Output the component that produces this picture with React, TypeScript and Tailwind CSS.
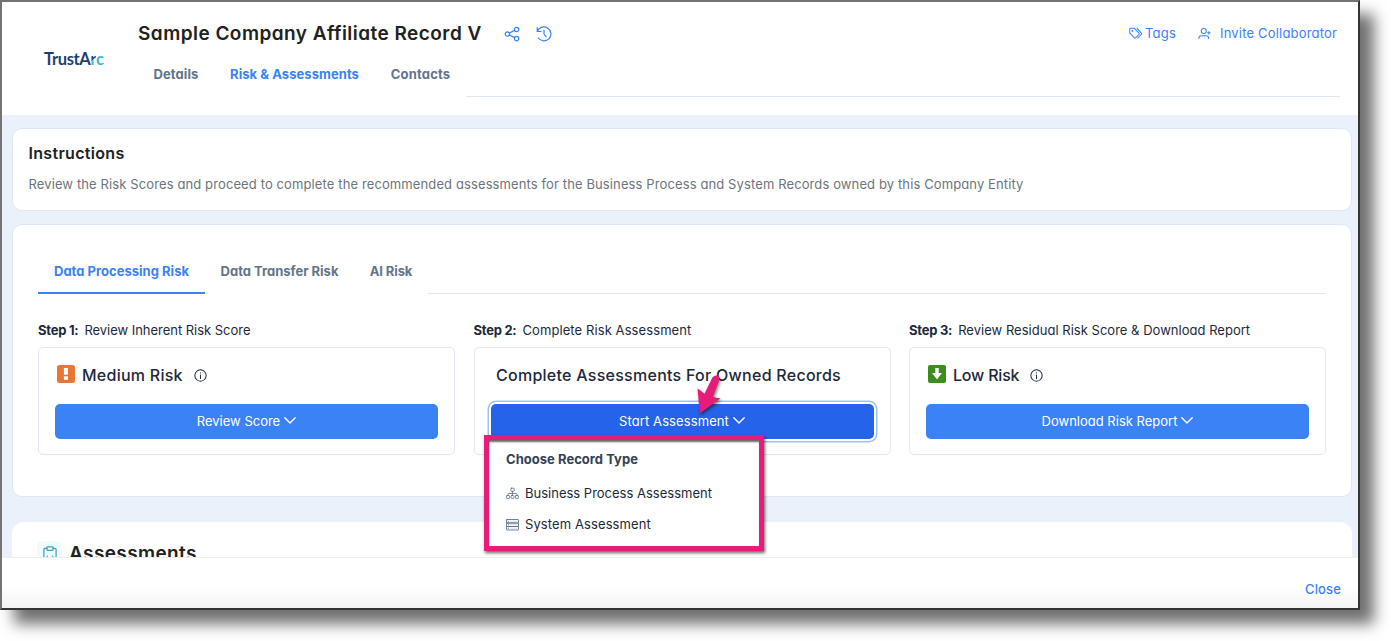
import type { ReactNode } from "react";

type IconProps = { className?: string };

function Icon({ className = "", box = 16, width = 1.1, children }: IconProps & { box?: number; width?: number; children: ReactNode }) {
  return (
    <svg
      viewBox={`0 0 ${box} ${box}`}
      fill="none"
      stroke="currentColor"
      strokeWidth={width}
      strokeLinecap="round"
      strokeLinejoin="round"
      className={`shrink-0 ${className}`}
    >
      {children}
    </svg>
  );
}

const ShareIcon = ({ className }: IconProps) => (
  <Icon className={className} width={1.2}>
    <circle cx="3.4" cy="8" r="2.2" />
    <circle cx="12.6" cy="3.5" r="2.2" />
    <circle cx="12.6" cy="12.6" r="2.2" />
    <path d="M5.4 7 10.6 4.4M5.4 9l5.2 2.6" />
  </Icon>
);

const HistoryIcon = ({ className }: IconProps) => (
  <Icon className={className} width={1.2}>
    <path d="M1.2 1.6v3.9h3.9M1.4 5.3A7 7 0 1 1 2.3 12" />
    <path d="M8 4.3V8l2 2.7" />
  </Icon>
);

const TagsIcon = ({ className }: IconProps) => (
  <Icon className={className} box={14} width={1.1}>
    <path d="M.8 2v4.300l5 5.400a.9.9 0 0 0 1.300 0l3.700-3.900a.9.9 0 0 0 0-1.300L5.800 1.400H1.400a.6.6 0 0 0-.6.6Z" />
    <path d="M8.600 1.500l4.700 5a.9.9 0 0 1 0 1.300l-3.900 4.100" />
    <circle cx="3.7" cy="4.300" r=".4" fill="currentColor" />
  </Icon>
);

const UserPlusIcon = ({ className }: IconProps) => (
  <Icon className={className} box={14} width={1.1}>
    <circle cx="6.2" cy="4.2" r="2.7" />
    <path d="M.9 12.500v-.5c0-1.700 1.300-2.700 2.800-2.700h5c1.500 0 2.800 1 2.800 2.700v.5M11.700 4.800v3M10.200 6.300h3" />
  </Icon>
);

const InfoIcon = ({ className }: IconProps) => (
  <Icon className={className} box={14} width={1.1}>
    <circle cx="7" cy="7" r="6.100" />
    <path d="M7 6.400v3.700M7 4v.2" />
  </Icon>
);

const ChevronIcon = () => (
  <Icon className="size-[14px]" box={14} width={1.4}>
    <path d="M1.800 3.700 7 8.900l5.200-5.200" />
  </Icon>
);

const SitemapIcon = ({ className }: IconProps) => (
  <Icon className={className} box={14} width={0.9}>
    <rect x="5.200" y="1.300" width="3.600" height="3.400" rx=".6" />
    <rect x=".6" y="9.200" width="3.200" height="3.100" rx=".6" />
    <rect x="5.400" y="9.200" width="3.200" height="3.100" rx=".6" />
    <rect x="10.200" y="9.200" width="3.200" height="3.100" rx=".6" />
    <path d="M7 4.700v4.500M2.200 9.200V7.800c0-.5.300-.8.800-.8h8c.5 0 .8.300.8.800v1.400" />
  </Icon>
);

const ServerIcon = ({ className }: IconProps) => (
  <Icon className={className} box={13} width={0.9}>
    <rect x=".5" y="1.500" width="12" height="3.500" rx=".4" />
    <rect x=".5" y="5" width="12" height="3.500" rx=".4" />
    <rect x=".5" y="8.500" width="12" height="3.500" rx=".4" />
    <path d="M2.300 3.250h.3M2.300 6.750h.3M2.300 10.250h.3" />
    <path d="M4.500 3.250h6.500M4.500 6.750h6.500M4.500 10.250h6.500" strokeOpacity=".25" />
  </Icon>
);

const ClipboardIcon = ({ className }: IconProps) => (
  <Icon className={className} box={14} width={1.2}>
    <path d="M4 2.400H1.900a1 1 0 0 0-1 1V15M10 2.400h2.100a1 1 0 0 1 1 1V15" />
    <rect x="3.900" y=".8" width="6.200" height="3.600" rx=".8" />
    <path d="M4.300 10.200v1.400M9.700 10.200v1.400M6.500 11.500h1" />
  </Icon>
);

const MediumBadge = () => (
  <svg viewBox="0 0 18 18" className="size-[18px] shrink-0">
    <rect width="18" height="18" rx="2.500" fill="#e97634" />
    <path d="M6.900 3h4v6.800h-4zM6.900 11.300h4v3.500h-4z" fill="#fff" />
  </svg>
);

const LowBadge = () => (
  <svg viewBox="0 0 18 18" className="size-[18px] shrink-0">
    <rect width="18" height="18" rx="2" fill="#3c8c1e" />
    <path d="M7.300 3h3.400v5H14l-5 6.500L4 8h3.300z" fill="#fff" />
  </svg>
);

function Tab({ label, className, active = false }: { label: string; className: string; active?: boolean }) {
  return (
    <button
      className={`flex items-center justify-center text-[13px] font-bold ${active ? "text-[#3b82f6]" : "text-[#64748b]"} ${className}`}
    >
      {label}
    </button>
  );
}

function Step({ step, label, labelClass, children }: { step: string; label: string; labelClass: string; children: ReactNode }) {
  return (
    <section className="text-[#1e293b]">
      <p className="flex h-5 items-center gap-[6px] pt-[2px] text-[13px]">
        <b className="tracking-[-0.25px]">{step}</b>
        <span className={labelClass}>{label}</span>
      </p>
      <div className="mt-[7px] flex h-[108px] flex-col rounded-[5px] border border-[#e2e8f0] px-4 pt-[14px]">
        {children}
      </div>
    </section>
  );
}

function ActionButton({ label, className }: { label: string; className: string }) {
  return (
    <button className={`mt-4 flex h-[35px] w-full shrink-0 items-center justify-center gap-[3px] rounded-[5px] pb-px pl-px text-[13px] text-white ${className}`}>
      <span className="pt-px">{label}</span>
      <ChevronIcon />
    </button>
  );
}

function RecordTypeMenu() {
  return (
    <div className="absolute top-[435px] left-[484px] h-[116px] w-[280px] border-[5px] border-[#e61c78] bg-white pt-[9px] pl-[17px] text-[13px] text-[#1e293b] shadow-[1px_2px_3px_rgba(0,0,0,0.6),inset_0_3px_2px_-1px_rgba(0,0,0,0.6),inset_1px_0_1px_rgba(0,0,0,0.15)]">
      <h4 className="h-5 leading-5 font-bold tracking-[0.03px] text-[#334155]">Choose Record Type</h4>
      <ul className="mt-[9px] flex flex-col">
        <li className="flex h-[31px] items-center gap-[6px]">
          <SitemapIcon className="size-[13px] text-[#64748b]" />
          Business Process Assessment
        </li>
        <li className="flex h-[31px] items-center gap-[6px]">
          <ServerIcon className="size-[13px] text-[#64748b]" />
          <span className="tracking-[0.1px]">System Assessment</span>
        </li>
      </ul>
    </div>
  );
}

function Pointer() {
  return (
    <svg viewBox="0 0 34 48" className="absolute top-[370px] left-[692px] h-[48px] w-[34px] drop-shadow-[1px_2px_1.500px_rgba(0,0,0,0.5)]">
      <path d="M7.800 43.500 5.500 18.200l7 5.500 8-16.500q2.600-2.600 5.500-1.300 2.300 1.600 1 4.600l-6 16.500 7.500 1.500Z" fill="#e61c78" />
    </svg>
  );
}

export default function App() {
  return (
    <div className="relative h-[641px] w-[1391px] overflow-hidden bg-white font-['Inter',sans-serif] [font-feature-settings:'cv11']">
      <div className="flex h-[610px] w-[1360px] flex-col border-2 border-t-[#757373] border-r-[#343434] border-b-[#343434] border-l-[#757373] bg-white shadow-[14px_14px_14px_rgba(0,0,0,0.56)]">
        <header className="flex h-[113px] shrink-0">
          <div className="w-[136px] pt-[46px] pl-[42px] font-['Lato',sans-serif] text-[16.500px] leading-[22px] font-bold tracking-[-0.350px] text-[#1c3f76]">
            TrustA<span className="bg-linear-135 from-[#1c3f76] from-50% to-[#3cb8d2] to-50% bg-clip-text text-transparent">r</span>
            <span className="text-[#3cb8d2]">c</span>
          </div>
          <div className="flex w-[1202px] flex-col pt-[18px]">
            <div className="flex h-[27px] items-center">
              <h1 className="text-[19px] leading-[27px] font-semibold tracking-[0.460px] text-[#212121]">Sample Company Affiliate Record V</h1>
              <ShareIcon className="ml-[22px] size-4 text-[#3b82f6]" />
              <HistoryIcon className="ml-4 size-4 text-[#3b82f6]" />
              <div className="ml-auto flex items-center pr-[3px] text-[13px] text-[#3b82f6]">
                <TagsIcon className="size-[13px]" />
                <span className="ml-[3px] tracking-[0.2px]">Tags</span>
                <UserPlusIcon className="ml-[22px] size-[13px]" />
                <span className="ml-[9px] tracking-[0.180px]">Invite Collaborator</span>
              </div>
            </div>
            <nav className="mt-[5px] flex h-[45px]">
              <Tab label="Details" className="w-[76px] pt-px tracking-[0.1px]" />
              <Tab label="Risk & Assessments" className="w-[161px] pt-px tracking-[0.060px]" active />
              <Tab label="Contacts" className="w-[91px] pt-px tracking-[0.170px]" />
              <div className="flex-1 border-b border-[#dfe7f1]" />
            </nav>
          </div>
        </header>

        <main className="flex min-h-0 flex-1 flex-col overflow-hidden bg-[#eaf1fa] pt-[13px] pr-[6px] pl-[10px]">
          <section className="h-[83px] shrink-0 rounded-[10px] border border-[#dfe7f1] bg-white pt-[14px] pl-[15.500px]">
            <h2 className="h-5 text-[16px] leading-5 font-semibold tracking-[0.310px] text-[#212121]">Instructions</h2>
            <p className="mt-[11px] h-5 text-[13px] leading-5 tracking-[0.114px] text-[#6c757d]">
              Review the Risk Scores and proceed to complete the recommended assessments for the Business Process and System Records owned by this Company Entity
            </p>
          </section>

          <section className="mt-[13px] h-[273px] shrink-0 rounded-[10px] border border-[#dfe7f1] bg-white px-[25px] pt-[23px]">
            <nav className="flex h-[46px]">
              <Tab label="Data Processing Risk" className="w-[167px] border-b-2 border-[#3b82f6] pt-[3px] tracking-[0.020px]" active />
              <Tab label="Data Transfer Risk" className="w-[149px] border-b-2 border-transparent pt-[3px]" />
              <Tab label="AI Risk" className="w-[74px] border-b-2 border-transparent pt-[3px] tracking-[-0.1px]" />
              <div className="flex-1 border-b border-[#dfe7f1]" />
            </nav>
            <div className="mt-[26px] grid w-[1288px] grid-cols-3 gap-[18.500px]">
              <Step step="Step 1:" label="Review Inherent Risk Score" labelClass="tracking-[-0.030px]">
                <h3 className="flex h-[26px] items-center pl-[2px] text-[16px] font-medium">
                  <span className="pb-[3px]"><MediumBadge /></span>
                  <span className="ml-[7px] tracking-[0.250px]">Medium Risk</span>
                  <InfoIcon className="ml-[11px] size-[13px]" />
                </h3>
                <ActionButton label="Review Score" className="bg-[#3b82f6]" />
              </Step>
              <Step step="Step 2:" label="Complete Risk Assessment" labelClass="tracking-[0.090px]">
                <h3 className="flex h-[26px] items-center pl-[5.500px] text-[16px] font-medium tracking-[0.264px]">Complete Assessments For Owned Records</h3>
                <ActionButton
                  label="Start Assessment"
                  className="bg-[#2563eb] tracking-[0.1px] shadow-[0_0_0_2px_#ffffff,0_0_0_3.500px_#9dc1fb]"
                />
              </Step>
              <Step step="Step 3:" label="Review Residual Risk Score & Download Report" labelClass="tracking-[0.020px]">
                <h3 className="flex h-[26px] items-center pl-[2px] text-[16px] font-medium">
                  <span className="pb-[3px]"><LowBadge /></span>
                  <span className="ml-[7px] tracking-[-0.2px]">Low Risk</span>
                  <InfoIcon className="ml-[11px] size-[13px]" />
                </h3>
                <ActionButton label="Download Risk Report" className="bg-[#3b82f6]" />
              </Step>
            </div>
          </section>

          <section className="mt-[25px] flex h-[90px] shrink-0 items-start rounded-t-[12px] bg-white pt-[19px] pl-[25px]">
            <span className="flex size-[25px] items-start justify-center rounded-[5px] bg-[#effbfd] pt-[5px]">
              <ClipboardIcon className="size-[14px] text-[#3aa3bf]" />
            </span>
            <h2 className="ml-[7px] text-[19px] leading-[25px] font-semibold tracking-[0.380px] text-[#212121]">Assessments</h2>
          </section>
        </main>

        <footer className="flex h-[51px] shrink-0 justify-end border-t border-[#eceef1] bg-linear-to-b from-white from-55% to-[#f4f4f4] pt-[21px] pr-[17px]">
          <button className="h-5 text-[13px] leading-5 font-medium tracking-[0.140px] text-[#3b82f6]">Close</button>
        </footer>
      </div>

      <RecordTypeMenu />
      <Pointer />
    </div>
  );
}
